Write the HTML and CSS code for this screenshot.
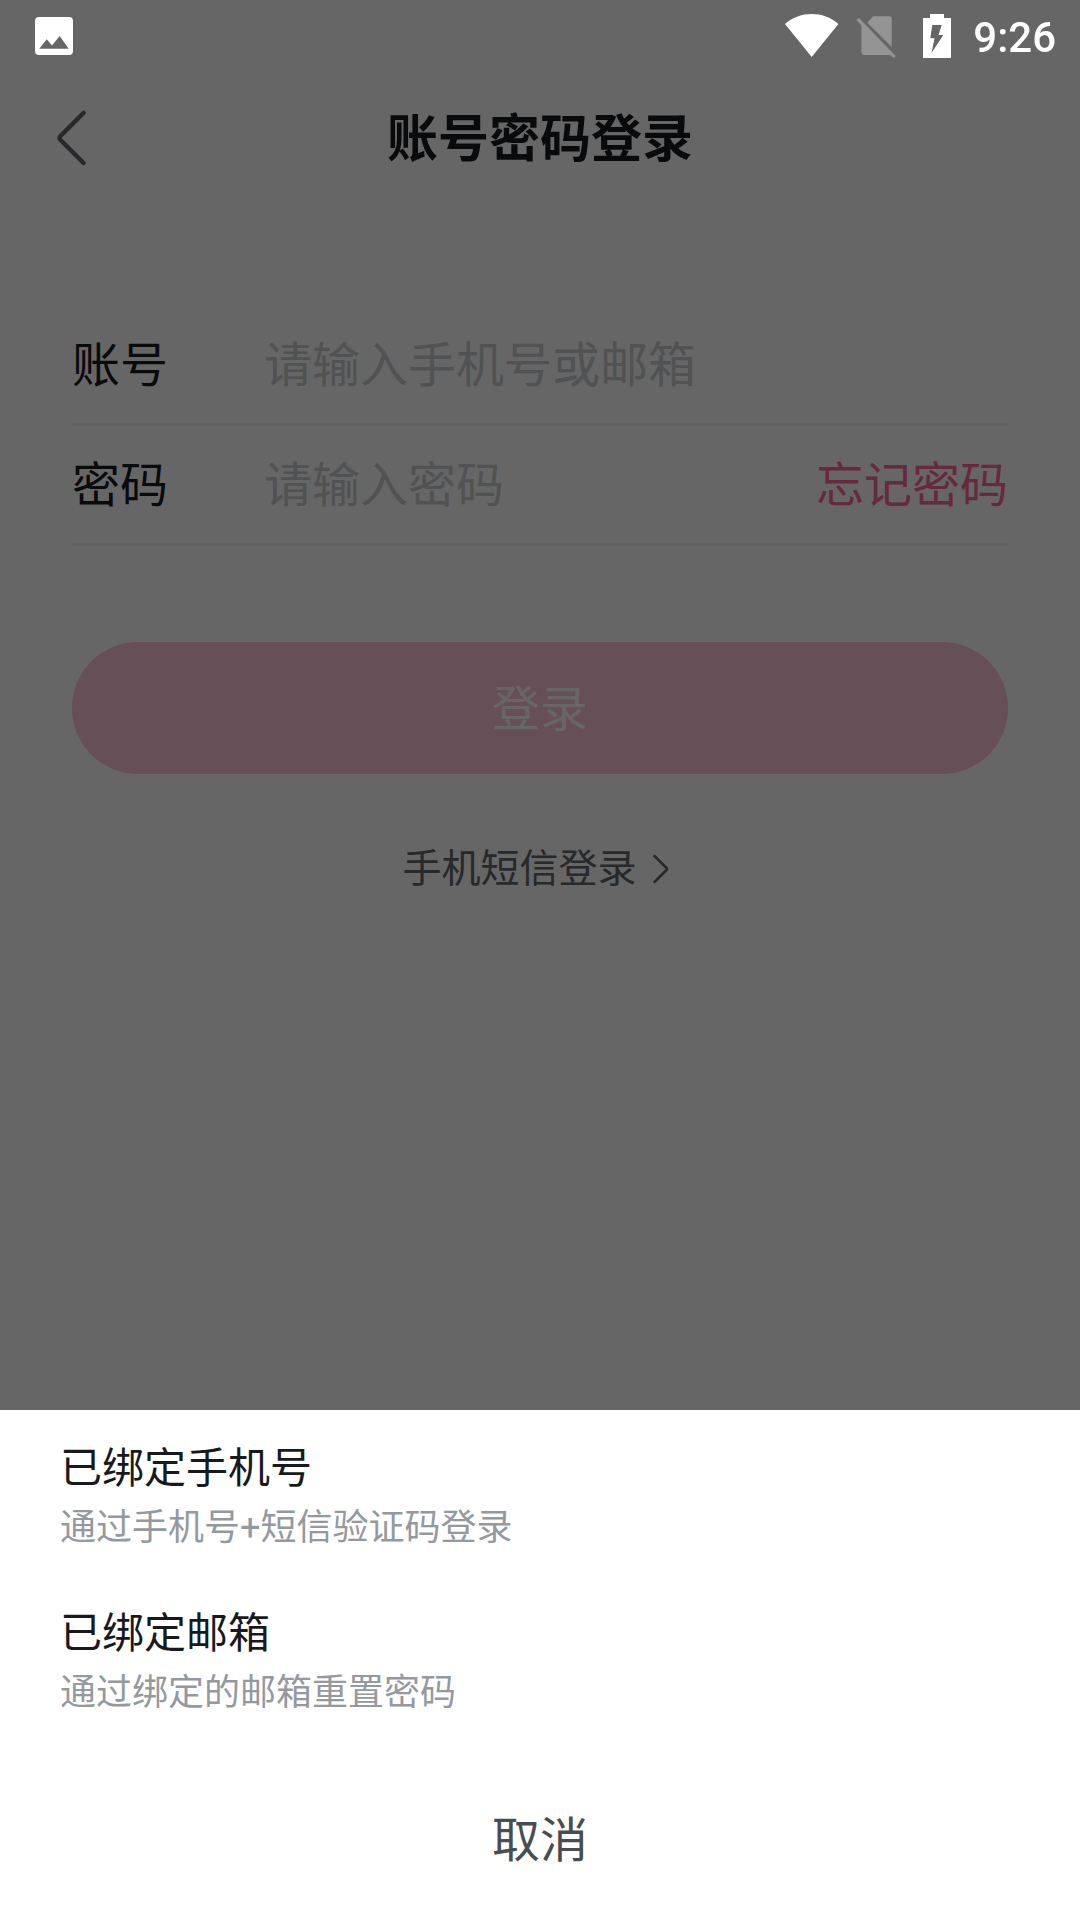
FILE: index.html
```html
<!DOCTYPE html>
<html lang="zh-CN">
<head>
  <meta charset="utf-8">
  <meta name="viewport" content="width=device-width, initial-scale=1">
  <title>账号密码登录</title>
  <link rel="stylesheet" href="styles.css">
</head>
<body>
  <div class="status-bar">
    <svg class="status-icon" width="38" height="44" viewBox="0 -3 38 44" aria-hidden="true">
      <path fill="#fff" fill-rule="evenodd" d="M4 0H34Q38 0 38 4V34Q38 38 34 38H4Q0 38 0 34V4Q0 0 4 0ZM4.300 31.700H33.700L24.700 19L17 28.500L11.700 22.300Z"/>
    </svg>
    <div class="status-right">
      <svg class="status-icon wifi" width="54" height="44" viewBox="0 0 54 44" aria-hidden="true">
        <path fill="#fff" d="M0 10C8 3 17 0 26.700 0S45.400 3 53.400 10L26.700 43Z"/>
      </svg>
      <svg class="status-icon sim" width="40" height="44" viewBox="0 -2 40 44" aria-hidden="true">
        <path fill="#949494" d="M11.400 6.700L17 .3H33.200Q35.700 .3 35.700 2.800V31ZM.3 4L3 2L39.700 40L37.300 42L34.400 39H8.400Q5.400 39 5.400 36V9.300Z"/>
      </svg>
      <svg class="status-icon battery" width="28" height="44" viewBox="0 0 28 44" aria-hidden="true">
        <path fill="#fff" fill-rule="evenodd" d="M7 0H21V4H28V44H0V4H7ZM9.300 11L7.300 24.300H11.500L8.500 39L20.300 21H15.500L18.700 11Z"/>
      </svg>
      <time class="clock">9:26</time>
    </div>
  </div>

  <header class="nav">
    <button class="back" type="button" aria-label="返回">
      <svg width="30" height="56" viewBox="0 0 30 56" fill="none" stroke="#61666d" stroke-width="4.500" stroke-linecap="round" stroke-linejoin="round" aria-hidden="true">
        <path d="M26.500 3L3.500 26Q1.500 28 3.500 30L26.500 53"/>
      </svg>
    </button>
    <h1 class="nav-title">账号密码登录</h1>
  </header>

  <main class="login">
    <form class="form">
      <div class="row">
        <label class="label" for="account">账号</label>
        <input class="field" id="account" type="text" placeholder="请输入手机号或邮箱">
      </div>
      <div class="row">
        <label class="label" for="password">密码</label>
        <input class="field" id="password" type="password" placeholder="请输入密码">
        <a class="forgot" href="#reset">忘记密码</a>
      </div>
      <button class="submit" type="submit">登录</button>
    </form>
    <a class="sms" href="#sms">手机短信登录
      <svg width="16" height="30" viewBox="0 0 16 30" fill="none" stroke="#61666d" stroke-width="2.500" stroke-linecap="round" stroke-linejoin="round" aria-hidden="true">
        <path d="M1.500 2L13.500 14Q14.500 15 13.500 16L1.500 28"/>
      </svg>
    </a>
  </main>

  <div class="scrim"></div>
  <section class="sheet" id="reset" role="dialog" aria-label="忘记密码">
    <button class="option" type="button">
      <span class="option-title">已绑定手机号</span>
      <span class="option-note">通过手机号+短信验证码登录</span>
    </button>
    <button class="option" type="button">
      <span class="option-title">已绑定邮箱</span>
      <span class="option-note">通过绑定的邮箱重置密码</span>
    </button>
    <button class="cancel" type="button">取消</button>
  </section>
</body>
</html>
```
FILE: styles.css
```css
* {
  box-sizing: border-box;
}

body {
  margin: 0;
  min-height: 100vh;
  background: #fff;
  color: #18191c;
  font-family: Roboto, "Noto Sans CJK SC", sans-serif;
  font-size: 48px;
  line-height: 72px;
}

button,
input {
  margin: 0;
  padding: 0;
  border: 0;
  background: none;
  color: inherit;
  font: inherit;
}

svg {
  display: block;
  flex: none;
}

a {
  text-decoration: none;
}

/* System status bar, kept above the scrim */
.status-bar {
  position: relative;
  z-index: 2;
  display: flex;
  align-items: center;
  justify-content: space-between;
  height: 72px;
  padding: 0 24px 0 35px;
}

.status-right {
  display: flex;
  align-items: center;
}

.wifi {
  margin-right: 17px;
}

.sim {
  margin-right: 27px;
}

.battery {
  margin-right: 22px;
}

.clock {
  padding-top: 3px;
  color: #fff;
  font-size: 42px;
  font-weight: 500;
  line-height: 48px;
}

/* Title bar */
.nav {
  display: grid;
  grid-template-columns: 144px 1fr 144px;
  align-items: center;
  height: 132px;
}

.back {
  display: flex;
  align-items: center;
  height: 132px;
  padding-left: 57px;
}

.nav-title {
  margin: 0;
  padding-top: 3px;
  font-size: 51px;
  font-weight: 700;
  text-align: center;
}

/* Login form */
.login {
  display: flex;
  flex-direction: column;
  padding: 102px 72px 0;
}

.form {
  display: flex;
  flex-direction: column;
}

.row {
  display: flex;
  align-items: center;
  height: 120px;
  padding-top: 3px;
  border-bottom: 3px solid #f1f2f3;
}

.label {
  flex: none;
  width: 192px;
}

.field {
  flex: 1;
  min-width: 0;
  height: 72px;
  outline: 0;
}

.field::placeholder {
  color: #c9ccd0;
  opacity: 1;
}

.forgot {
  color: #f69;
}

.submit {
  height: 132px;
  margin-top: 96px;
  padding-top: 3px;
  border-radius: 66px;
  background: #ffc6d6;
  color: #fff;
}

.sms {
  display: flex;
  align-items: center;
  align-self: center;
  gap: 16px;
  margin-top: 65px;
  padding-right: 9px;
  color: #61666d;
  font-size: 39px;
  line-height: 60px;
}

/* Bottom sheet */
.scrim {
  position: fixed;
  inset: 0;
  z-index: 1;
  background: rgba(0, 0, 0, 0.6);
}

.sheet {
  position: fixed;
  right: 0;
  bottom: 0;
  left: 0;
  z-index: 2;
  display: flex;
  flex-direction: column;
  background: #fff;
}

.option {
  display: flex;
  flex-direction: column;
  gap: 2px;
  padding: 29px 60px 20px;
  text-align: left;
}

.option-title {
  font-size: 42px;
  line-height: 60px;
}

.option-note {
  color: #9499a0;
  font-size: 36px;
  line-height: 54px;
}

.cancel {
  height: 162px;
  margin-top: 18px;
  padding-top: 3px;
  color: #484c53;
}
```
